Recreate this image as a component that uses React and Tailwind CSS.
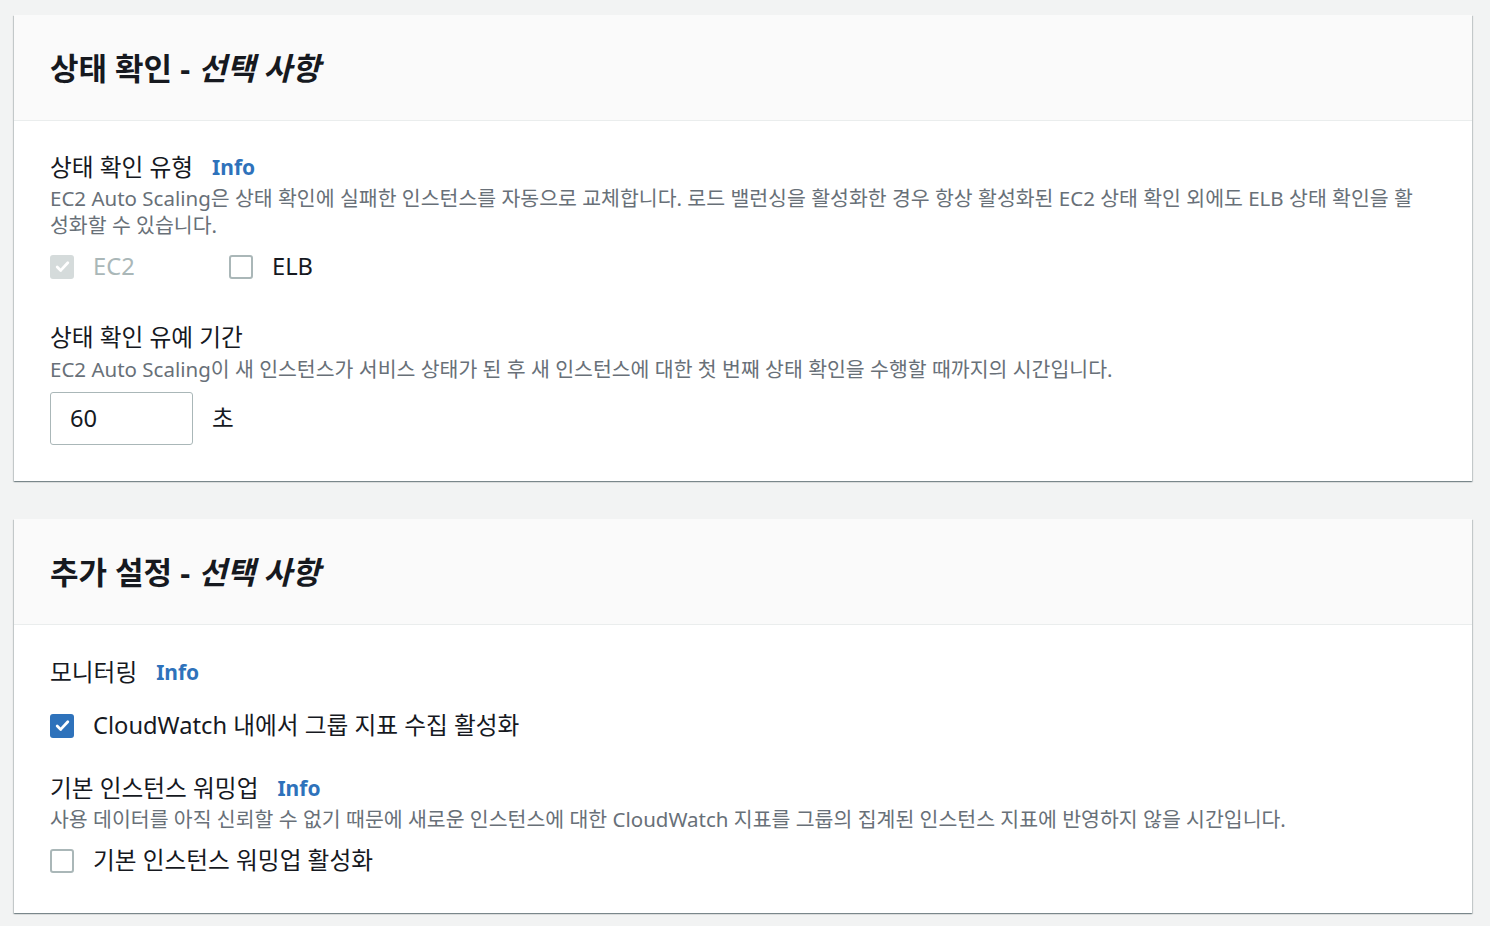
import React from "react";

const font = { fontFamily: '"Noto Sans", "Noto Sans CJK KR", sans-serif' };

const Info = () => (
  <span className="ml-[19px] text-[21px] font-bold text-[#2e72bb]">Info</span>
);

const Tick = () => (
  <svg viewBox="0 0 16 16" className="h-[17px] w-[17px]" fill="none" stroke="#fff" strokeWidth="2.6" strokeLinecap="round" strokeLinejoin="round">
    <path d="M3 8.5l3.3 3.2L13 4.5" />
  </svg>
);

const Check = ({ checked, disabled }) => {
  if (disabled) {
    return (
      <span className="flex h-6 w-6 shrink-0 items-center justify-center rounded-[3px] bg-[#d5dbdb]">
        <Tick />
      </span>
    );
  }
  if (checked) {
    return (
      <span className="flex h-6 w-6 shrink-0 items-center justify-center rounded-[3px] bg-[#2e72bb]">
        <Tick />
      </span>
    );
  }
  return <span className="h-6 w-6 shrink-0 rounded-[3px] border-2 border-[#aab7b8] bg-white" />;
};

const Card = ({ title, children }) => (
  <section className="mx-[14px] w-[1458px] bg-white shadow-[0_1px_1px_0_rgba(0,28,36,0.3),1px_1px_1px_0_rgba(0,28,36,0.15),-1px_1px_1px_0_rgba(0,28,36,0.15)]">
    <header className="flex h-[106px] items-center border-b border-[#eaeded] bg-[#fafafa] px-9">
      <h2 className="text-[31px] font-bold leading-[40px] text-[#16191f]">
        {title} - <i>선택 사항</i>
      </h2>
    </header>
    <div className="px-9">{children}</div>
  </section>
);

export default function App() {
  return (
    <div style={font} className="min-h-[926px] w-[1490px] bg-[#f2f3f3] pt-[15px] text-[#16191f]">
      <Card title="상태 확인">
        <div className="pt-[30px] pb-[36px]">
          {/* 상태 확인 유형 */}
          <div className="flex items-center text-[23.7px] leading-[32px]">
            상태 확인 유형
            <Info />
          </div>
          <p className="mt-[2px] text-[20.5px] leading-[27px] text-[#687078]">
            EC2 Auto Scaling은 상태 확인에 실패한 인스턴스를 자동으로 교체합니다. 로드 밸런싱을 활성화한 경우 항상 활성화된 EC2 상태 확인 외에도 ELB 상태 확인을 활
            <br />
            성화할 수 있습니다.
          </p>
          <div className="mt-[11px] flex items-center text-[23.7px] leading-[33px]">
            <label className="flex w-[179px] items-center gap-[19px] text-[#aab7b8]">
              <Check disabled />
              EC2
            </label>
            <label className="flex items-center gap-[19px]">
              <Check />
              ELB
            </label>
          </div>

          {/* 유예 기간 */}
          <div className="mt-[38px] text-[23.7px] leading-[32px]">상태 확인 유예 기간</div>
          <p className="mt-[3px] text-[20.5px] leading-[27px] text-[#687078]">
            EC2 Auto Scaling이 새 인스턴스가 서비스 상태가 된 후 새 인스턴스에 대한 첫 번째 상태 확인을 수행할 때까지의 시간입니다.
          </p>
          <div className="mt-[9px] flex items-center gap-[19px] text-[23.7px] leading-[33px]">
            <div className="flex h-[53px] w-[143px] items-center rounded-[3px] border border-[#aab7b8] px-[19px]">60</div>
            <span>초</span>
          </div>
        </div>
      </Card>

      <div className="h-[38px]" />

      <Card title="추가 설정">
        <div className="pt-[31px] pb-[36px]">
          <div className="flex items-center text-[23.7px] leading-[32px]">
            모니터링
            <Info />
          </div>
          <label className="mt-[21px] flex items-center gap-[19px] text-[23.7px] leading-[33px]">
            <Check checked />
            CloudWatch 내에서 그룹 지표 수집 활성화
          </label>

          <div className="mt-[30px] flex items-center text-[23.7px] leading-[32px]">
            기본 인스턴스 워밍업
            <Info />
          </div>
          <p className="mt-[2px] text-[20.5px] leading-[27px] text-[#687078]">
            사용 데이터를 아직 신뢰할 수 없기 때문에 새로운 인스턴스에 대한 CloudWatch 지표를 그룹의 집계된 인스턴스 지표에 반영하지 않을 시간입니다.
          </p>
          <label className="mt-[11px] flex items-center gap-[19px] text-[23.7px] leading-[33px]">
            <Check />
            기본 인스턴스 워밍업 활성화
          </label>
        </div>
      </Card>
    </div>
  );
}
